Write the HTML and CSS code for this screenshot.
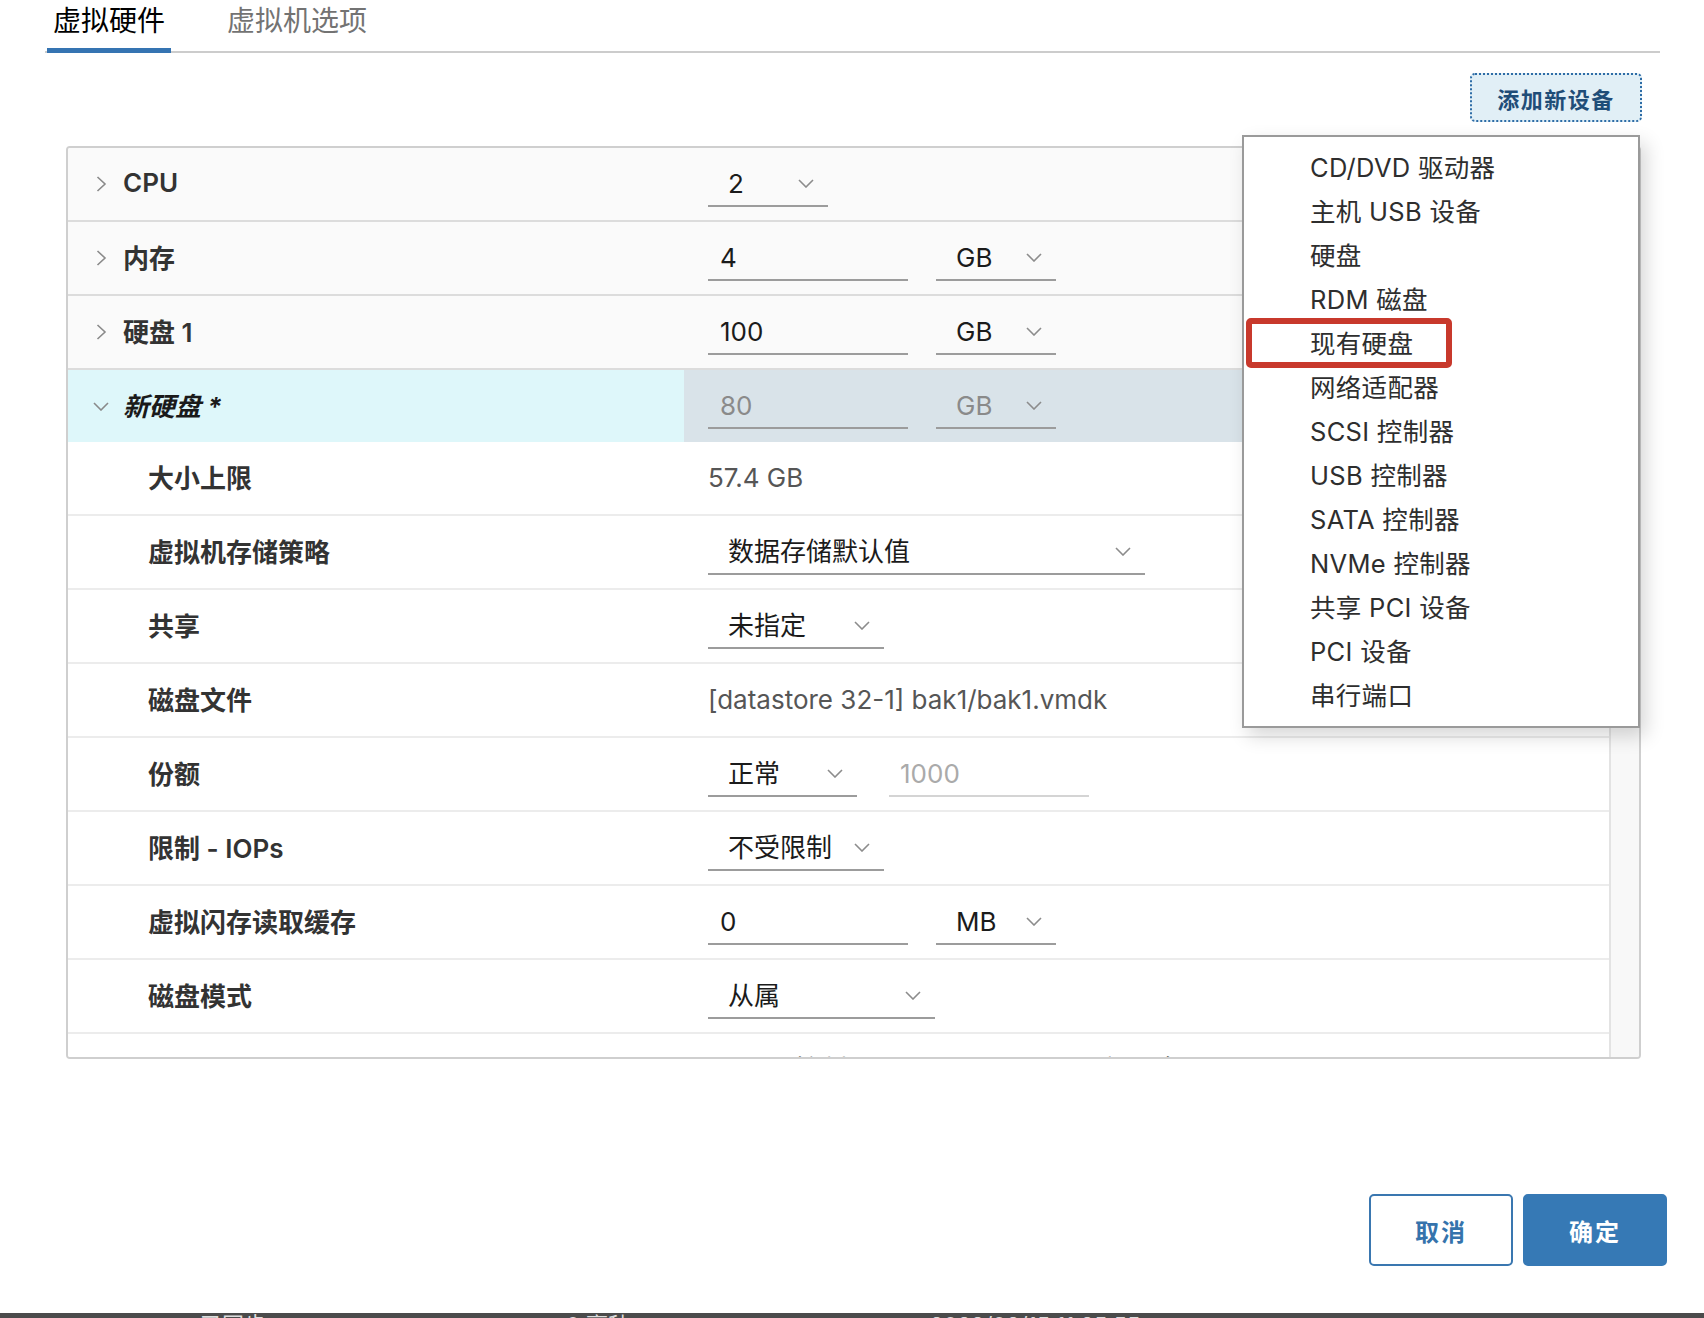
FILE: index.html
```html
<!DOCTYPE html>
<html lang="zh-CN">
<head>
<meta charset="utf-8">
<title>编辑设置</title>
<link rel="stylesheet" href="styles.css">
</head>
<body>
<div class="page">
  <nav class="tabs">
    <div class="tab active">虚拟硬件</div>
    <div class="tab">虚拟机选项</div>
  </nav>

  <div class="toolbar">
    <button class="add-btn">添加新设备</button>
  </div>

  <div class="panel">
    <div class="rows">
      <div class="row top">
        <div class="label"><span class="exp"><svg width="11" height="16" viewBox="0 0 11 16"><polyline points="1.5,1 9,8 1.5,15"/></svg></span>CPU</div>
        <div class="value">
          <div class="select s-cpu"><span>2</span><svg class="chev" viewBox="0 0 16 9"><polyline points="1,1 8,8 15,1"/></svg></div>
        </div>
      </div>
      <div class="row top">
        <div class="label"><span class="exp"><svg width="11" height="16" viewBox="0 0 11 16"><polyline points="1.5,1 9,8 1.5,15"/></svg></span>内存</div>
        <div class="value">
          <div class="input s-num"><span>4</span></div>
          <div class="select s-unit"><span>GB</span><svg class="chev" viewBox="0 0 16 9"><polyline points="1,1 8,8 15,1"/></svg></div>
        </div>
      </div>
      <div class="row top">
        <div class="label"><span class="exp"><svg width="11" height="16" viewBox="0 0 11 16"><polyline points="1.5,1 9,8 1.5,15"/></svg></span>硬盘 1</div>
        <div class="value">
          <div class="input s-num"><span>100</span></div>
          <div class="select s-unit"><span>GB</span><svg class="chev" viewBox="0 0 16 9"><polyline points="1,1 8,8 15,1"/></svg></div>
        </div>
      </div>
      <div class="row top sel">
        <div class="label new"><span class="exp"><svg width="16" height="9" viewBox="0 0 16 9"><polyline points="1,1 8,8 15,1"/></svg></span>新硬盘 *</div>
        <div class="value disabled">
          <div class="input s-num"><span>80</span></div>
          <div class="select s-unit"><span>GB</span><svg class="chev" viewBox="0 0 16 9"><polyline points="1,1 8,8 15,1"/></svg></div>
        </div>
      </div>
      <div class="row">
        <div class="label">大小上限</div>
        <div class="value"><span class="text">57.4 GB</span></div>
      </div>
      <div class="row">
        <div class="label">虚拟机存储策略</div>
        <div class="value">
          <div class="select s-policy"><span>数据存储默认值</span><svg class="chev" viewBox="0 0 16 9"><polyline points="1,1 8,8 15,1"/></svg></div>
        </div>
      </div>
      <div class="row">
        <div class="label">共享</div>
        <div class="value">
          <div class="select s-share"><span>未指定</span><svg class="chev" viewBox="0 0 16 9"><polyline points="1,1 8,8 15,1"/></svg></div>
        </div>
      </div>
      <div class="row">
        <div class="label">磁盘文件</div>
        <div class="value"><span class="text">[datastore 32-1] bak1/bak1.vmdk</span></div>
      </div>
      <div class="row">
        <div class="label">份额</div>
        <div class="value gap32">
          <div class="select s-shares"><span>正常</span><svg class="chev" viewBox="0 0 16 9"><polyline points="1,1 8,8 15,1"/></svg></div>
          <div class="input s-num faint"><span>1000</span></div>
        </div>
      </div>
      <div class="row">
        <div class="label">限制 - IOPs</div>
        <div class="value">
          <div class="select s-share"><span>不受限制</span><svg class="chev" viewBox="0 0 16 9"><polyline points="1,1 8,8 15,1"/></svg></div>
        </div>
      </div>
      <div class="row">
        <div class="label">虚拟闪存读取缓存</div>
        <div class="value">
          <div class="input s-num"><span>0</span></div>
          <div class="select s-unit"><span>MB</span><svg class="chev" viewBox="0 0 16 9"><polyline points="1,1 8,8 15,1"/></svg></div>
        </div>
      </div>
      <div class="row">
        <div class="label">磁盘模式</div>
        <div class="value">
          <div class="select s-mode"><span>从属</span><svg class="chev" viewBox="0 0 16 9"><polyline points="1,1 8,8 15,1"/></svg></div>
        </div>
      </div>
      <div class="row">
        <div class="label">虚拟设备节点</div>
        <div class="value">
          <div class="select s-mode"><span>SCSI 控制器 0</span><svg class="chev" viewBox="0 0 16 9"><polyline points="1,1 8,8 15,1"/></svg></div>
          <div class="select s-mode"><span>SCSI(0:1) 新硬盘</span><svg class="chev" viewBox="0 0 16 9"><polyline points="1,1 8,8 15,1"/></svg></div>
        </div>
      </div>
    </div>
    <div class="scrollbar"></div>
  </div>

  <div class="footer">
    <button class="btn outline">取消</button>
    <button class="btn primary">确定</button>
  </div>

  <div class="taskbar"><span>已同步</span><span>0 毫秒</span><span>2023/03/15 11:25:55</span></div>

  <ul class="menu">
    <li>CD/DVD 驱动器</li>
    <li>主机 USB 设备</li>
    <li>硬盘</li>
    <li>RDM 磁盘</li>
    <li class="marked">现有硬盘<span class="mark"></span></li>
    <li>网络适配器</li>
    <li>SCSI 控制器</li>
    <li>USB 控制器</li>
    <li>SATA 控制器</li>
    <li>NVMe 控制器</li>
    <li>共享 PCI 设备</li>
    <li>PCI 设备</li>
    <li>串行端口</li>
  </ul>
</div>
</body>
</html>
```

FILE: styles.css
```css
* { box-sizing: border-box; }

html, body {
  margin: 0;
  padding: 0;
  background: #ffffff;
}

body {
  width: 1704px;
  height: 1318px;
  overflow: hidden;
  font-family: Inter, "Noto Sans CJK SC", sans-serif;
  font-size: 26px;
  color: #1b1b1b;
}

.page {
  position: relative;
  height: 1318px;
  display: flex;
  flex-direction: column;
}

/* Tabs */
.tabs {
  display: flex;
  align-items: flex-start;
  gap: 50px;
  margin-left: 45px;
  width: 1615px;
  height: 53px;
  border-bottom: 2px solid #cccccc;
}

.tab {
  box-sizing: content-box;
  font-size: 28px;
  line-height: 42px;
  padding: 0 6px 6px;
  border-bottom: 5px solid transparent;
  color: #737373;
}

.tab.active {
  margin-left: 2px;
  color: #000;
  border-bottom-color: #3574b2;
}

/* toolbar */
.toolbar {
  display: flex;
  justify-content: flex-end;
  padding-right: 62px;
  margin-top: 20px;
}

.add-btn {
  width: 172px;
  height: 49px;
  border: 2px dotted #2d6ca6;
  border-radius: 5px;
  background: #e1eff6;
  color: #1f4d78;
  font-family: inherit;
  font-size: 22px;
  font-weight: 700;
  letter-spacing: 1.5px;
  padding: 0;
}

/* panel */
.panel {
  margin-top: 24px;
  margin-left: 66px;
  width: 1575px;
  height: 913px;
  border: 2px solid #cfcfcf;
  border-radius: 4px;
  display: flex;
  overflow: hidden;
}

.rows {
  flex: 1;
  min-width: 0;
}

.scrollbar {
  width: 30px;
  background: #f8f8f8;
  border-left: 2px solid #e3e3e3;
}

.row {
  display: grid;
  grid-template-columns: 616px 1fr;
  height: 74px;
  border-bottom: 2px solid #ececec;
  background: #fff;
}

.row.top {
  background: #fafafa;
  border-bottom-color: #dcdcdc;
}

.row.sel {
  height: 72px;
  border-bottom: none;
}

.label {
  display: flex;
  align-items: center;
  padding-left: 80px;
  padding-bottom: 3px;
  font-weight: 600;
  color: #333;
}

.row.top .label {
  padding-left: 25px;
  gap: 14px;
}

.exp {
  width: 16px;
  display: flex;
  justify-content: center;
  align-items: center;
  margin-top: 3px;
}

.exp svg {
  fill: none;
  stroke: #8a8a8a;
  stroke-width: 1.6;
}

.label.new {
  font-style: italic;
  font-weight: 700;
  color: #1a1a1a;
  background: #def7fa;
}

.value {
  display: flex;
  align-items: center;
  gap: 28px;
  padding-left: 24px;
}

.value.gap32 { gap: 32px; }

.value.disabled {
  background: #d9e3e9;
  color: #8a8a8a;
}

.text {
  color: #565656;
  margin-bottom: 2px;
}

.select, .input {
  height: 46px;
  border-bottom: 2px solid #9c9c9c;
  display: flex;
  align-items: center;
  white-space: nowrap;
}

.select {
  justify-content: space-between;
  padding: 0 14px 0 20px;
}

.select span {
  margin-bottom: 3px;
}

.select.s-unit span,
.select.s-cpu span {
  margin-bottom: 0;
}

.input {
  padding-left: 12px;
}

.input.faint {
  color: #aaaaaa;
  border-bottom-color: #d4d4d4;
  padding-left: 11px;
}

.chev {
  width: 16px;
  height: 9px;
  fill: none;
  stroke: #8c8c8c;
  stroke-width: 1.6;
  flex: none;
}

.s-cpu { width: 120px; }
.s-num { width: 200px; }
.s-unit { width: 120px; }
.s-policy { width: 437px; }
.s-share { width: 176px; }
.s-shares { width: 149px; }
.s-mode { width: 227px; }

/* footer */
.footer {
  display: flex;
  justify-content: flex-end;
  gap: 10px;
  padding-right: 37px;
  margin-top: 135px;
}

.btn {
  width: 144px;
  height: 72px;
  border-radius: 5px;
  font-family: inherit;
  font-size: 24px;
  font-weight: 700;
  letter-spacing: 2px;
  padding: 0;
}

.btn.outline {
  background: #fff;
  border: 2px solid #3a77b0;
  color: #3573ac;
}

.btn.primary {
  background: #3679b5;
  border: 2px solid #3679b5;
  color: #fff;
}

.taskbar {
  margin-top: auto;
  height: 5px;
  background: #4b4b4b;
  overflow: hidden;
  display: flex;
  gap: 300px;
  padding-left: 200px;
  font-size: 22px;
  line-height: 22px;
  color: #ddd;
}

.taskbar span {
  margin-top: 1px;
}

/* dropdown menu */
.menu {
  position: absolute;
  left: 1242px;
  top: 135px;
  width: 398px;
  height: 593px;
  margin: 0;
  padding: 9px 0;
  list-style: none;
  background: #fff;
  border: 2px solid #9a9a9a;
  box-shadow: 6px 8px 18px rgba(0, 0, 0, 0.16);
  z-index: 10;
}

.menu li {
  position: relative;
  height: 44px;
  line-height: 44px;
  padding-left: 66px;
  font-size: 25.5px;
  letter-spacing: 0.3px;
  color: #2e2e2e;
  white-space: nowrap;
}

.mark {
  position: absolute;
  left: 2px;
  top: -4px;
  width: 206px;
  height: 50px;
  border: 6px solid #c8392c;
  border-radius: 5px;
}
```
